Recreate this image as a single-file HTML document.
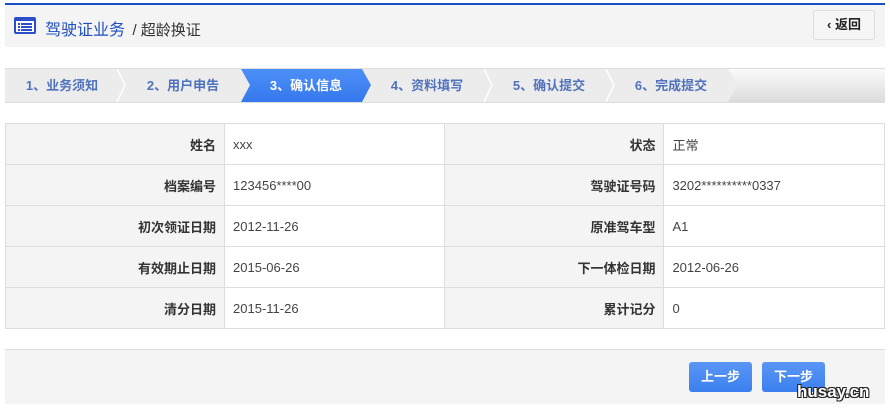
<!DOCTYPE html>
<html><head><meta charset="utf-8"><style>
body{margin:0;width:890px;height:408px;background:#fff;font-family:"Liberation Sans","Noto Sans CJK SC",sans-serif;position:relative;overflow:hidden}
.top{position:absolute;left:5px;top:3px;width:880px;height:2px;background:#1a4fc4}
.hdr{position:absolute;left:5px;top:5px;width:880px;height:42px;background:#f4f4f4}
.ttl{position:absolute;left:45px;top:16px;font-size:16px;color:#1f4fc0}
.ttl span{color:#333;font-size:15px;margin-left:3px}
.back{position:absolute;left:813px;top:10px;width:62px;height:30px;border:1px solid #ddd;border-radius:3px;background:#f6f6f6;font-size:13px;font-weight:bold;color:#222;line-height:28px;text-align:center;box-sizing:border-box}
table{position:absolute;left:5px;top:123px;border-collapse:collapse;width:880px}
td{border:1px solid #ddd;height:40px;font-size:13px;color:#444;padding:0 8px}
td.l{background:#f4f4f4;text-align:right;font-weight:bold;color:#333;width:203px}
td.v{width:204px}
.ft{position:absolute;left:5px;top:349px;width:880px;height:54px;background:#f4f4f4;border-top:1px solid #ddd}
.btn{position:absolute;top:362px;width:63px;height:30px;background:linear-gradient(#5a96f5,#3b7fee);border-radius:3px;color:#fff;font-size:13px;font-weight:bold;line-height:30px;text-align:center}
.wm{position:absolute;left:797px;top:382px;font-size:17px;font-weight:bold;color:#fff;text-shadow:-1px -1px 0 #222,1px -1px 0 #222,-1px 1px 0 #222,1px 1px 0 #222}
</style></head><body>
<div class="top"></div><div class="hdr"></div>
<svg style="position:absolute;left:14px;top:17px" width="22" height="17"><rect x="1" y="1" width="20" height="15" rx="1" fill="#fff" stroke="#2b4fc8" stroke-width="2"/><rect x="1" y="1" width="20" height="3" fill="#2b4fc8"/><g fill="#2b4fc8"><rect x="4" y="6" width="2" height="2"/><rect x="7" y="6" width="11" height="2"/><rect x="4" y="9" width="2" height="2"/><rect x="7" y="9" width="11" height="2"/><rect x="4" y="12" width="2" height="2"/><rect x="7" y="12" width="11" height="2"/></g></svg>
<div class="ttl">驾驶证业务 <span>/ 超龄换证</span></div>
<div class="back">‹ 返回</div>
<svg style="position:absolute;left:0;top:68px" width="890" height="35">
<defs><linearGradient id="g" x1="0" x2="0" y1="0" y2="1"><stop offset="0" stop-color="#4d8ff7"/><stop offset="1" stop-color="#3578ec"/></linearGradient>
<linearGradient id="e" x1="0" x2="0" y1="0" y2="1"><stop offset="0" stop-color="#fafafa"/><stop offset="1" stop-color="#dcdcdc"/></linearGradient></defs>
<rect x="5" y="1" width="880" height="33" fill="#ececec"/>
<polygon points="728,1 885,1 885,34 728,34 737,17" fill="url(#e)"/>
<line x1="5" y1="0.5" x2="885" y2="0.5" stroke="#ddd"/><line x1="5" y1="34.5" x2="885" y2="34.5" stroke="#ddd"/>
<g fill="none" stroke="#fff" stroke-width="1.5"><polyline points="117,1 125,17 117,34"/><polyline points="484,1 492,17 484,34"/><polyline points="606,1 614,17 606,34"/></g>
<polygon points="241,1 362,1 371,17 362,34 241,34 250,17" fill="url(#g)"/>
<g font-size="13" font-weight="bold" fill="#5072bc" text-anchor="middle" font-family="Liberation Sans,Noto Sans CJK SC,sans-serif">
<text x="62" y="22">1、业务须知</text><text x="183" y="22">2、用户申告</text><text x="306" y="22" fill="#fff">3、确认信息</text><text x="427" y="22">4、资料填写</text><text x="549" y="22">5、确认提交</text><text x="671" y="22">6、完成提交</text></g>
</svg>
<table>
<tr><td class="l">姓名</td><td class="v">xxx</td><td class="l">状态</td><td class="v">正常</td></tr>
<tr><td class="l">档案编号</td><td class="v">123456****00</td><td class="l">驾驶证号码</td><td class="v">3202**********0337</td></tr>
<tr><td class="l">初次领证日期</td><td class="v">2012-11-26</td><td class="l">原准驾车型</td><td class="v">A1</td></tr>
<tr><td class="l">有效期止日期</td><td class="v">2015-06-26</td><td class="l">下一体检日期</td><td class="v">2012-06-26</td></tr>
<tr><td class="l">清分日期</td><td class="v">2015-11-26</td><td class="l">累计记分</td><td class="v">0</td></tr>
</table>
<div class="ft"></div>
<div class="btn" style="left:689px">上一步</div>
<div class="btn" style="left:762px">下一步</div>
<div class="wm">husay.cn</div>
</body></html>
